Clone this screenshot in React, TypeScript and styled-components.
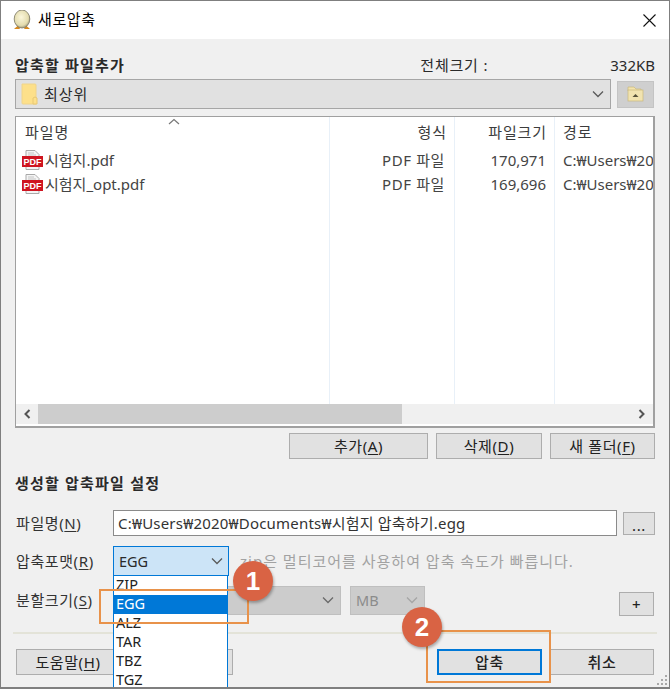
import React from "react";
import styled, { createGlobalStyle } from "styled-components";

const GlobalStyle = createGlobalStyle`
  html, body {
    margin: 0;
    padding: 0;
    background: #f0f0f0;
  }
  * {
    box-sizing: border-box;
  }
`;

const Window = styled.div`
  position: relative;
  width: 670px;
  height: 689px;
  overflow: hidden;
  background: #f0f0f0;
  border: 1px solid #7f7f7f;
  border-bottom-width: 2px;
  color: #2a2a2a;
  font-family: "Noto Sans", "Noto Sans CJK KR", sans-serif;
  font-size: 15px;
  line-height: 20px;
`;

const TitleBar = styled.div`
  display: flex;
  align-items: center;
  height: 38px;
  padding: 0 13px 0 12px;
  background: #fff;
  color: #000;
`;

const TitleText = styled.span`
  margin-left: 7px;
  margin-top: -2px;
  flex: 1;
  letter-spacing: 0.6px;
`;

const Content = styled.div`
  display: flex;
  flex-direction: column;
  padding: 0 14px;
`;

const HeadRow = styled.div`
  display: flex;
  align-items: center;
  justify-content: space-between;
  height: 40px;
  padding-top: 11px;
`;

const SectionTitle = styled.div`
  font-weight: 700;
  letter-spacing: 1.2px;
`;

const TotalGroup = styled.div`
  display: flex;
`;

const TotalLabel = styled.span`
  margin-right: 122px;
  letter-spacing: 0.8px;
`;

const PathRow = styled.div`
  display: flex;
  align-items: center;
  gap: 6px;
  height: 30px;
`;

const PathCombo = styled.div`
  flex: 1;
  display: flex;
  align-items: center;
  height: 30px;
  padding: 0 6px 0 5px;
  gap: 6px;
  background: #e1e1e1;
  border: 1px solid #a6a6a6;
  letter-spacing: 1px;
`;

const Grow = styled.span`
  flex: 1;
`;

const FolderButton = styled.div`
  display: flex;
  align-items: center;
  justify-content: center;
  width: 37px;
  height: 27px;
  margin-right: 1px;
  background: #cfcfcf;
  border: 1px solid #c4c4c4;
`;

const ListBox = styled.div`
  display: flex;
  flex-direction: column;
  height: 312px;
  margin-top: 7px;
  background: #fff;
  border: 1px solid #a0a0a0;
  border-width: 1px 2px 2px 1px;
`;

const ListColumns = styled.div`
  flex: 1;
  display: grid;
  grid-template-columns: 314px 125px 100px 1fr;
  min-height: 0;
`;

const Column = styled.div<{ $align?: string }>`
  position: relative;
  display: flex;
  flex-direction: column;
  text-align: ${(p) => p.$align || "left"};
  border-right: 1px solid #e8f0f8;
  overflow: hidden;
  white-space: nowrap;
  &:last-child {
    border-right: none;
  }
`;

const ColumnHead = styled.div<{ $pad: string }>`
  height: 31px;
  padding: ${(p) => p.$pad};
  line-height: 31px;
  color: #3c3c3c;
  letter-spacing: 0.9px;
  border-right: 1px solid #e5e5e5;
  margin-right: -1px;
`;

const SortMark = styled.svg`
  position: absolute;
  left: 152px;
  top: 1px;
`;

const Cell = styled.div<{ $pad: string; $end?: boolean }>`
  display: flex;
  align-items: center;
  height: 24px;
  padding: ${(p) => p.$pad};
  color: #444;
  justify-content: ${(p) => (p.$end ? "flex-end" : "flex-start")};
`;

const TypeCell = styled(Cell)`
  letter-spacing: 0.6px;
`;

const FileName = styled.span`
  margin-left: 2px;
`;

const HScroll = styled.div`
  display: flex;
  align-items: center;
  height: 20px;
  margin-bottom: 2px;
  background: #f0f0f0;
`;

const ScrollArrow = styled.div`
  display: flex;
  align-items: center;
  justify-content: center;
  width: 22px;
  height: 100%;
`;

const ScrollTrack = styled.div`
  flex: 1;
  height: 100%;
`;

const ScrollThumb = styled.div`
  width: 364px;
  height: 100%;
  background: #cdcdcd;
`;

const ListActions = styled.div`
  display: flex;
  justify-content: flex-end;
  gap: 8px;
  margin-top: 5px;
`;

const Button = styled.div<{ $w: number; $h?: number; $focus?: boolean; $bold?: boolean }>`
  display: flex;
  align-items: center;
  justify-content: center;
  width: ${(p) => p.$w}px;
  height: ${(p) => p.$h || 26}px;
  flex: none;
  background: #e1e1e1;
  border: ${(p) => (p.$focus ? "2px solid #0078d7" : "1px solid #adadad")};
  color: #222;
  font-weight: ${(p) => (p.$bold ? 500 : 400)};
  letter-spacing: 0.6px;
`;

const SettingsTitle = styled(SectionTitle)`
  margin-top: 14px;
  height: 20px;
`;

const FieldRow = styled.div<{ $h: number; $mt: number }>`
  display: flex;
  align-items: center;
  height: ${(p) => p.$h}px;
  margin-top: ${(p) => p.$mt}px;
`;

const FieldLabel = styled.div<{ $w?: number }>`
  width: ${(p) => p.$w || 98}px;
  padding-left: 1px;
  flex: none;
  color: #333;
  letter-spacing: 0.6px;
  white-space: nowrap;
`;

const Key = styled.u`
  text-underline-offset: 2px;
`;

const NameInput = styled.div`
  width: 504px;
  height: 26px;
  display: flex;
  align-items: center;
  padding-left: 4px;
  background: #fff;
  border: 1px solid #8a8a8a;
  color: #333;
  white-space: nowrap;
  letter-spacing: 0.2px;
`;

const BrowseButton = styled(Button)`
  margin-left: 6px;
  align-items: flex-end;
  line-height: 18px;
`;

const FormatCombo = styled.div`
  display: flex;
  align-items: center;
  width: 116px;
  height: 30px;
  padding: 0 5px;
  background: #cce4f7;
  border: 1px solid #0078d7;
  font-size: 14.5px;
`;

const Hint = styled.div`
  margin-left: 11px;
  color: #a2a2a2;
  white-space: nowrap;
  letter-spacing: 1px;
`;

const DisabledCombo = styled.div<{ $w: number }>`
  display: flex;
  align-items: center;
  width: ${(p) => p.$w}px;
  height: 29px;
  padding: 0 6px 0 5px;
  background: #cccccc;
  border: 1px solid #bfbfbf;
  color: #8b8b8b;
  font-size: 14.5px;
  flex: none;
`;

const SplitRow = styled(FieldRow)`
  gap: 9px;
`;

const PlusButton = styled(Button)`
  margin-left: auto;
  margin-right: 1px;
  margin-top: 8px;
`;

const Separator = styled.div`
  height: 2px;
  margin: 17px -2px 0;
  background: #e3e3d8;
`;

const BottomRow = styled.div`
  display: flex;
  margin-top: 15px;
  padding: 0 1px;
`;

const LeftGroup = styled.div`
  display: flex;
  gap: 5px;
  flex: 1;
`;

const RightGroup = styled.div`
  display: flex;
  gap: 8px;
`;

const Dropdown = styled.div`
  position: absolute;
  left: 112px;
  top: 574px;
  width: 115px;
  height: 120px;
  background: #fff;
  border: 1px solid #0078d7;
  font-size: 14.5px;
`;

const DropItem = styled.div<{ $selected?: boolean }>`
  height: 19px;
  line-height: 17px;
  padding-left: 2px;
  color: ${(p) => (p.$selected ? "#fff" : "#222")};
  background: ${(p) => (p.$selected ? "#0078d7" : "transparent")};
`;

const Callout = styled.div<{ $l: number; $t: number; $w: number; $h: number }>`
  position: absolute;
  left: ${(p) => p.$l}px;
  top: ${(p) => p.$t}px;
  width: ${(p) => p.$w}px;
  height: ${(p) => p.$h}px;
  border: 2px solid #e8924a;
  pointer-events: none;
`;

const Badge = styled.div<{ $l: number; $t: number }>`
  position: absolute;
  left: ${(p) => p.$l}px;
  top: ${(p) => p.$t}px;
  width: 40px;
  height: 40px;
  display: flex;
  align-items: center;
  justify-content: center;
  border-radius: 50%;
  background: #d96344;
  color: #fff;
  font-family: "Liberation Sans", sans-serif;
  font-size: 26px;
  font-weight: 700;
  box-shadow: 1px 2px 3px rgba(0, 0, 0, 0.3);
`;

const Grip = styled.svg`
  position: absolute;
  right: 1px;
  bottom: 1px;
`;

const Chevron = ({ color = "#5a5a5a" }: { color?: string }) => (
  <svg width="12" height="8" viewBox="0 0 12 8" fill="none">
    <path d="M1 1.5 L6 6.5 L11 1.5" stroke={color} strokeWidth="1.3" />
  </svg>
);

const EggIcon = () => (
  <svg width="18" height="20" viewBox="0 0 18 20">
    <defs>
      <radialGradient id="egg" cx="0.45" cy="0.4" r="0.65">
        <stop offset="0" stopColor="#fbf7dc" />
        <stop offset="0.7" stopColor="#e4dcae" />
        <stop offset="1" stopColor="#8d8a70" />
      </radialGradient>
    </defs>
    <path d="M1 19 L5 15.5 L7 19 Z" fill="#d98a1e" />
    <path d="M11 19 L13 15.5 L17 19 Z" fill="#d98a1e" />
    <ellipse cx="9" cy="9" rx="7.8" ry="9" fill="url(#egg)" stroke="#77745f" strokeWidth="0.8" />
  </svg>
);

const CloseIcon = () => (
  <svg width="13" height="13" viewBox="0 0 13 13" fill="none">
    <path d="M0.5 0.5 L12.5 12.5 M12.5 0.5 L0.5 12.5" stroke="#111" strokeWidth="1.1" />
  </svg>
);

const FolderIcon = () => (
  <svg width="17" height="22" viewBox="0 0 17 22">
    <path d="M1 1 H14 Q15 1 15 2 V21 H2 Q1 21 1 20 Z" fill="#fde08a" stroke="#f0d48a" />
    <path d="M12 21 V15 Q14 13 16 15 V21 Z" fill="#fde08a" stroke="#e8c874" />
  </svg>
);

const UpFolderIcon = () => (
  <svg width="17" height="16" viewBox="0 0 17 16">
    <path d="M1 1 H7 L9 3 H14 V5 H1 Z" fill="#f3e3ad" stroke="#c9b77c" strokeWidth="0.7" />
    <rect x="1" y="4" width="15" height="11" fill="#f1e3b0" stroke="#c9b77c" strokeWidth="0.7" />
    <path d="M5.5 11 L8.5 8 L11.5 11 Z" fill="#55503a" />
  </svg>
);

const PdfIcon = () => (
  <svg width="21" height="20" viewBox="0 0 21 20">
    <path d="M4 0.5 H13 L17 4.5 V19.5 H4 Z" fill="#f4f4f4" stroke="#a9a9a9" />
    <path d="M6 3 H12 M6 5 H14" stroke="#c4c4c4" />
    <rect x="0" y="6" width="21" height="11" fill="#cf1420" />
    <text
      x="10.5"
      y="15"
      fill="#fff"
      fontFamily="Liberation Sans, sans-serif"
      fontSize="9"
      fontWeight="700"
      textAnchor="middle"
    >
      PDF
    </text>
  </svg>
);

const ArrowLeft = () => (
  <svg width="8" height="10" viewBox="0 0 8 10" fill="none">
    <path d="M6.5 1 L2.5 5 L6.5 9" stroke="#555" strokeWidth="2" />
  </svg>
);

const ArrowRight = () => (
  <svg width="8" height="10" viewBox="0 0 8 10" fill="none">
    <path d="M1.5 1 L5.5 5 L1.5 9" stroke="#555" strokeWidth="2" />
  </svg>
);

const files = [
  { name: "시험지.pdf", type: "PDF 파일", size: "170,971", path: "C:₩Users₩2020₩Documents" },
  { name: "시험지_opt.pdf", type: "PDF 파일", size: "169,696", path: "C:₩Users₩2020₩Documents" },
];

const formats = ["ZIP", "EGG", "ALZ", "TAR", "TBZ", "TGZ"];

export default function App() {
  return (
    <Window>
      <GlobalStyle />
      <TitleBar>
        <EggIcon />
        <TitleText>새로압축</TitleText>
        <CloseIcon />
      </TitleBar>

      <Content>
        <HeadRow>
          <SectionTitle>압축할 파일추가</SectionTitle>
          <TotalGroup>
            <TotalLabel>전체크기 :</TotalLabel>
            <span>332KB</span>
          </TotalGroup>
        </HeadRow>

        <PathRow>
          <PathCombo>
            <FolderIcon />
            <Grow>최상위</Grow>
            <Chevron />
          </PathCombo>
          <FolderButton>
            <UpFolderIcon />
          </FolderButton>
        </PathRow>

        <ListBox>
          <ListColumns>
            <Column>
              <SortMark width="12" height="7" viewBox="0 0 12 7" fill="none">
                <path d="M1 6 L6 1.5 L11 6" stroke="#777" strokeWidth="1.2" />
              </SortMark>
              <ColumnHead $pad="0 0 0 9px">파일명</ColumnHead>
              {files.map((f) => (
                <Cell key={f.name} $pad="0 0 0 6px">
                  <PdfIcon />
                  <FileName>{f.name}</FileName>
                </Cell>
              ))}
            </Column>
            <Column $align="right">
              <ColumnHead $pad="0 7px 0 0">형식</ColumnHead>
              {files.map((f) => (
                <TypeCell key={f.name} $pad="0 9px 0 0" $end>
                  {f.type}
                </TypeCell>
              ))}
            </Column>
            <Column $align="right">
              <ColumnHead $pad="0 7px 0 0">파일크기</ColumnHead>
              {files.map((f) => (
                <Cell key={f.name} $pad="0 8px 0 0" $end>
                  {f.size}
                </Cell>
              ))}
            </Column>
            <Column>
              <ColumnHead $pad="0 0 0 8px">경로</ColumnHead>
              {files.map((f) => (
                <Cell key={f.name} $pad="0 0 0 8px">
                  {f.path}
                </Cell>
              ))}
            </Column>
          </ListColumns>
          <HScroll>
            <ScrollArrow>
              <ArrowLeft />
            </ScrollArrow>
            <ScrollTrack>
              <ScrollThumb />
            </ScrollTrack>
            <ScrollArrow>
              <ArrowRight />
            </ScrollArrow>
          </HScroll>
        </ListBox>

        <ListActions>
          <Button $w={139}>
            <span>
              추가(<Key>A</Key>)
            </span>
          </Button>
          <Button $w={106}>
            <span>
              삭제(<Key>D</Key>)
            </span>
          </Button>
          <Button $w={105}>
            <span>
              새 폴더(<Key>F</Key>)
            </span>
          </Button>
        </ListActions>

        <SettingsTitle>생성할 압축파일 설정</SettingsTitle>

        <FieldRow $h={26} $mt={17}>
          <FieldLabel>
            파일명(<Key>N</Key>)
          </FieldLabel>
          <NameInput>C:₩Users₩2020₩Documents₩시험지 압축하기.egg</NameInput>
          <BrowseButton $w={32} $h={23}>
            ...
          </BrowseButton>
        </FieldRow>

        <FieldRow $h={30} $mt={10}>
          <FieldLabel>
            압축포맷(<Key>R</Key>)
          </FieldLabel>
          <FormatCombo>
            <Grow>EGG</Grow>
            <Chevron />
          </FormatCombo>
          <Hint>zip은 멀티코어를 사용하여 압축 속도가 빠릅니다.</Hint>
        </FieldRow>

        <SplitRow $h={30} $mt={9}>
          <FieldLabel $w={89}>
            분할크기(<Key>S</Key>)
          </FieldLabel>
          <DisabledCombo $w={228}>
            <Grow />
            <Chevron color="#6a6a6a" />
          </DisabledCombo>
          <DisabledCombo $w={75}>
            <Grow>MB</Grow>
            <Chevron color="#a5a5a5" />
          </DisabledCombo>
          <PlusButton $w={35} $h={24} $bold>
            +
          </PlusButton>
        </SplitRow>

        <Separator />

        <BottomRow>
          <LeftGroup>
            <Button $w={104}>
              <span>
                도움말(<Key>H</Key>)
              </span>
            </Button>
            <Button $w={108} />
          </LeftGroup>
          <RightGroup>
            <Button $w={105} $focus $bold>
              압축
            </Button>
            <Button $w={104} $bold>
              취소
            </Button>
          </RightGroup>
        </BottomRow>
      </Content>

      <Dropdown>
        {formats.map((f) => (
          <DropItem key={f} $selected={f === "EGG"}>
            {f}
          </DropItem>
        ))}
      </Dropdown>

      <Callout $l={98} $t={588} $w={150} $h={35} />
      <Callout $l={425} $t={629} $w={125} $h={53} />
      <Badge $l={232} $t={560}>1</Badge>
      <Badge $l={401} $t={606}>2</Badge>

      <Grip width="12" height="12" viewBox="0 0 12 12" fill="#a8a8a8">
        <rect x="9" y="1" width="2" height="2" />
        <rect x="5" y="5" width="2" height="2" />
        <rect x="9" y="5" width="2" height="2" />
        <rect x="1" y="9" width="2" height="2" />
        <rect x="5" y="9" width="2" height="2" />
        <rect x="9" y="9" width="2" height="2" />
      </Grip>
    </Window>
  );
}
